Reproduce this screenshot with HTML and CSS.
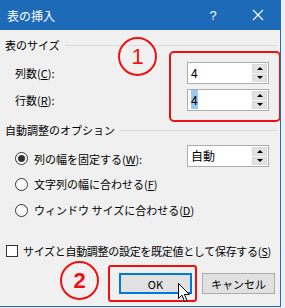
FILE: index.html
```html
<!DOCTYPE html>
<html lang="ja">
<head>
    <meta charset="UTF-8">
    <title>表の挿入</title>
    <link rel="stylesheet" href="styles.css">
</head>
<body>
    <div class="dialog">
        <div class="titlebar">
            <span class="title">表の挿入</span>
            <span class="help">?</span>
            <span class="close">
                <svg width="12" height="12" viewBox="0 0 12 12"><path d="M1 1 L11 11 M11 1 L1 11" stroke="#fff" stroke-width="1.2" fill="none"/></svg>
            </span>
        </div>

        <div class="content">
            <div class="group-head first"><span>表のサイズ</span><span class="rule"></span></div>

            <div class="row size-row">
                <span class="label">列数(<u>C</u>):</span>
                <div class="spin">
                    <span class="value">4</span>
                    <span class="arrows"><i class="up"></i><i class="down"></i></span>
                </div>
            </div>
            <div class="row size-row">
                <span class="label">行数(<u>R</u>):</span>
                <div class="spin">
                    <span class="value"><span class="selected">4</span></span>
                    <span class="arrows"><i class="up"></i><i class="down"></i></span>
                </div>
            </div>

            <div class="group-head second"><span>自動調整のオプション</span><span class="rule"></span></div>

            <div class="row option-row">
                <label class="radio"><span class="dot checked"></span><span class="text">列の幅を固定する(<u>W</u>):</span></label>
                <div class="spin">
                    <span class="value">自動</span>
                    <span class="arrows"><i class="up"></i><i class="down"></i></span>
                </div>
            </div>
            <label class="radio plain"><span class="dot"></span><span class="text">文字列の幅に合わせる(<u>F</u>)</span></label>
            <label class="radio plain"><span class="dot"></span><span class="text">ウィンドウ サイズに合わせる(<u>D</u>)</span></label>

            <label class="check"><span class="box"></span><span class="text">サイズと自動調整の設定を既定値として保存する(<u>S</u>)</span></label>

            <div class="buttons">
                <button class="btn default">OK</button>
                <button class="btn">キャンセル</button>
            </div>
        </div>

        <!-- annotations drawn over the dialog -->
        <div class="mark mark-1">1</div>
        <div class="frame frame-1"></div>
        <div class="mark mark-2">2</div>
        <div class="frame frame-2"></div>
        <svg class="cursor" width="13" height="20" viewBox="0 0 13 20">
            <path d="M0.5 0.5 L0.5 15.5 L4 12.2 L6.6 18.5 L9 17.5 L6.4 11.4 L11.3 11.4 Z" fill="#fff" stroke="#000" stroke-width="1" stroke-linejoin="miter"/>
        </svg>
    </div>
</body>
</html>
```

FILE: styles.css
```css
* { margin: 0; padding: 0; box-sizing: border-box; }
body {
    background: #f0f0f0;
    font-family: "Noto Sans CJK JP", "Liberation Sans", sans-serif;
    font-size: 11px;
    color: #000;
}
.dialog {
    position: relative;
    width: 281px;
    height: 307px;
    background: #f0f0f0;
    border-right: 1px solid #1d6bb8;
    border-bottom: 1px solid #1d6bb8;
    overflow: hidden;
}
.titlebar {
    height: 30px;
    background: #1d6bb8;
    color: #fff;
    display: flex;
    align-items: center;
    padding-left: 7px;
}
.title { font-size: 12px; flex: 1; }
.help {
    width: 46px;
    text-align: center;
    font-family: "Liberation Sans", sans-serif;
    font-size: 13px;
}
.close {
    width: 44px;
    display: flex;
    justify-content: center;
}
.content { padding-left: 5px; }
.text { white-space: nowrap; }
.group-head {
    display: flex;
    align-items: center;
    gap: 5px;
    height: 16px;
    line-height: 16px;
}
.group-head.first { margin-top: 7px; }
.group-head.second { margin-top: 11px; }
.rule { flex: 1; border-top: 1px solid #dcdcdc; margin-right: 3px; }
.row {
    display: grid;
    grid-template-columns: 1fr 82px;
    align-items: center;
    padding-right: 11px;
}
.size-row { height: 22px; margin-top: 5px; }
.group-head.first + .size-row { margin-top: 9px; }
.size-row .label { padding-left: 10px; }
.spin {
    height: 22px;
    display: flex;
    background: #fff;
    border: 1px solid #adadad;
}
.value {
    flex: 1;
    padding-left: 3px;
    line-height: 20px;
    font-size: 12px;
}
.selected { background: #99c9ef; padding: 1px 0; }
.arrows {
    width: 16px;
    display: flex;
    flex-direction: column;
    gap: 1px;
    padding: 1px 1px 1px 0;
}
.arrows i {
    flex: 1;
    background: #e3e3e3;
    border: 1px solid #d9d9d9;
    display: flex;
    align-items: center;
    justify-content: center;
}
.arrows i::after {
    content: "";
    border-left: 3px solid transparent;
    border-right: 3px solid transparent;
}
.arrows .up::after { border-bottom: 3px solid #000; }
.arrows .down::after { border-top: 3px solid #000; }
.option-row { margin-top: 7px; height: 22px; }
.option-row .radio { padding-top: 5px; }
.radio {
    display: flex;
    align-items: center;
    gap: 6px;
    padding-left: 10px;
    height: 16px;
}
.radio.plain { margin-top: 10px; }
.option-row + .radio.plain { margin-top: 9px; }
.dot {
    width: 13px;
    height: 13px;
    flex: none;
    border: 1px solid #333;
    border-radius: 50%;
    background: #fff;
    display: flex;
    align-items: center;
    justify-content: center;
}
.dot.checked::after {
    content: "";
    width: 7px;
    height: 7px;
    border-radius: 50%;
    background: #333;
}
.check {
    display: flex;
    align-items: center;
    gap: 5px;
    height: 16px;
    margin-top: 25px;
    padding-left: 1px;
    letter-spacing: -0.3px;
}
.box {
    width: 12px;
    height: 12px;
    flex: none;
    border: 1px solid #333;
    background: #fff;
}
.buttons {
    display: flex;
    justify-content: flex-end;
    gap: 10px;
    margin-top: 14px;
    padding-right: 5px;
}
.btn {
    width: 73px;
    height: 21px;
    background: #e1e1e1;
    border: 1px solid #adadad;
    font-family: inherit;
    font-size: 11px;
}
.btn.default { border: 2px solid #0078d7; }
.mark {
    position: absolute;
    width: 39px;
    height: 39px;
    border: 2px solid #ee1111;
    border-radius: 50%;
    color: #ee1111;
    font-family: "Liberation Sans", sans-serif;
    font-size: 22px;
    display: flex;
    align-items: center;
    justify-content: center;
}
.mark-1 { left: 118px; top: 37px; }
.mark-2 { left: 60px; top: 261px; font-weight: bold; }
.frame {
    position: absolute;
    border: 2px solid #ee1111;
    border-radius: 5px;
}
.frame-1 { left: 169px; top: 51px; width: 112px; height: 71px; }
.frame-2 { left: 108px; top: 265px; width: 89px; height: 37px; border-radius: 3px; }
.cursor { position: absolute; left: 178px; top: 283px; }
```
